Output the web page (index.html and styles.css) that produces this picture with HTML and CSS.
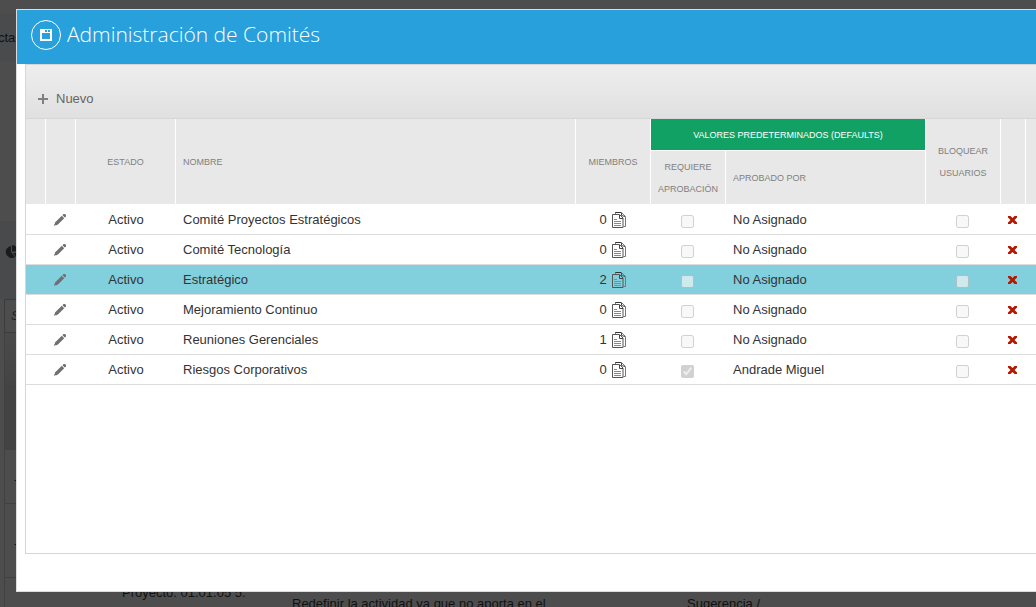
FILE: index.html
```html
<!DOCTYPE html>
<html lang="es">
<head>
<meta charset="utf-8">
<title>Administración de Comités</title>
<link rel="stylesheet" href="styles.css">
</head>
<body>
<svg width="0" height="0" class="sprite" aria-hidden="true">
  <symbol id="pencil" viewBox="0 0 12 12">
    <path fill="#707070" d="M8.500 1.200 9.500 0H11l1 1v1.500L10.800 3.500zM7.800 1.800l2.400 2.400-6 6-1.700 1-1.500.1L0 12v-1l.8-1.300.2-1.200z"/>
  </symbol>
  <symbol id="docs" viewBox="0 0 14 16">
    <path fill="none" stroke="#333" d="M3 .5h6.500"/>
    <path fill="none" stroke="#777" d="M3.500 2V.500M9.500.500l4 4v10h-2"/>
    <path fill="none" stroke="#555" d="M.5 2.500h7l3.500 3.500v9.500H.5z"/>
    <path fill="none" stroke="#444" d="M7.500 3v3.500H11M9.500 1v2.500l3.500 1"/>
    <path stroke="#888" d="M2 7.500h3M2 9.500h7M2 11.500h7M2 13.500h7"/>
  </symbol>
  <symbol id="cross" viewBox="0 0 9 8">
    <path fill="#b31800" d="M0 0h2.500l2 2 2-2H9v1.500L6.500 4 9 6.500V8H6.500l-2-2-2 2H0V6.500L2.500 4 0 1.500z"/>
  </symbol>
</svg>

<main class="page">
  <div class="page-top"></div>
  <div class="page-nav">ctas</div>
  <div class="page-gap"></div>
  <div class="page-title">
    <svg width="14" height="14" viewBox="0 0 14 14"><path fill="#1b1b1b" d="M7 1v6l4 5A6 6 0 1 1 7 1z"/><path fill="#1b1b1b" d="M8 0a6 6 0 0 1 6 6.500H8zM9 8h5l-2 4z"/></svg>
  </div>
  <div class="page-search"><span>S</span></div>
  <div class="page-grid">
    <div class="page-tools"></div>
    <div class="page-head"></div>
    <div class="page-row first"><span>-</span></div>
    <div class="page-row second"><span>-</span></div>
    <div class="page-row last">
      <p class="project">Proyecto. 01.01.05 5.</p>
      <p class="detail">Redefinir la actividad ya que no aporta en el</p>
      <p class="kind">Sugerencia /</p>
    </div>
  </div>
</main>

<section class="dialog" role="dialog" aria-labelledby="dialog-title">
  <header class="dialog-head">
    <svg class="badge" width="30" height="30" viewBox="0 0 30 30" aria-hidden="true">
      <circle cx="15" cy="15" r="14.500" fill="none" stroke="#fff"/>
      <path fill="#fff" fill-rule="evenodd" d="M9 9h12v12H9zM11 13v6h8v-6zM14 10v2h2v-2zM17 10v2h2v-2z"/>
    </svg>
    <h1 id="dialog-title">Administración de Comités</h1>
  </header>
  <div class="panel">
    <div class="toolbar">
      <button type="button" class="new">
        <svg width="10" height="10" viewBox="0 0 10 10" aria-hidden="true"><path fill="#808080" d="M4 0h2v4h4v2H6v4H4V6H0V4h4z"/></svg>
        Nuevo
      </button>
    </div>
    <table class="grid">
      <colgroup>
        <col class="c-mark"><col class="c-edit"><col class="c-state"><col class="c-name"><col class="c-small"><col class="c-small"><col class="c-by"><col class="c-small"><col class="c-del"><col>
      </colgroup>
      <thead>
        <tr>
          <th rowspan="2"></th><th rowspan="2"></th>
          <th rowspan="2">ESTADO</th>
          <th rowspan="2" class="left">NOMBRE</th>
          <th rowspan="2">MIEMBROS</th>
          <th colspan="2" class="group">VALORES PREDETERMINADOS (DEFAULTS)</th>
          <th rowspan="2">BLOQUEAR USUARIOS</th>
          <th rowspan="2"></th><th rowspan="2" class="end"></th>
        </tr>
        <tr><th>REQUIERE APROBACIÓN</th><th class="left">APROBADO POR</th></tr>
      </thead>
      <tbody>
        <tr><td></td><td><button type="button" aria-label="Editar"><svg width="12" height="12"><use href="#pencil"/></svg></button></td><td>Activo</td><td class="left">Comité Proyectos Estratégicos</td><td><span class="members">0<svg width="14" height="16"><use href="#docs"/></svg></span></td><td><input type="checkbox" disabled aria-label="Requiere aprobación"></td><td class="left">No Asignado</td><td><input type="checkbox" disabled aria-label="Bloquear usuarios"></td><td><button type="button" aria-label="Eliminar"><svg width="9" height="8"><use href="#cross"/></svg></button></td><td></td></tr>
        <tr><td></td><td><button type="button" aria-label="Editar"><svg width="12" height="12"><use href="#pencil"/></svg></button></td><td>Activo</td><td class="left">Comité Tecnología</td><td><span class="members">0<svg width="14" height="16"><use href="#docs"/></svg></span></td><td><input type="checkbox" disabled aria-label="Requiere aprobación"></td><td class="left">No Asignado</td><td><input type="checkbox" disabled aria-label="Bloquear usuarios"></td><td><button type="button" aria-label="Eliminar"><svg width="9" height="8"><use href="#cross"/></svg></button></td><td></td></tr>
        <tr class="selected"><td></td><td><button type="button" aria-label="Editar"><svg width="12" height="12"><use href="#pencil"/></svg></button></td><td>Activo</td><td class="left">Estratégico</td><td><span class="members">2<svg width="14" height="16"><use href="#docs"/></svg></span></td><td><input type="checkbox" disabled aria-label="Requiere aprobación"></td><td class="left">No Asignado</td><td><input type="checkbox" disabled aria-label="Bloquear usuarios"></td><td><button type="button" aria-label="Eliminar"><svg width="9" height="8"><use href="#cross"/></svg></button></td><td></td></tr>
        <tr><td></td><td><button type="button" aria-label="Editar"><svg width="12" height="12"><use href="#pencil"/></svg></button></td><td>Activo</td><td class="left">Mejoramiento Continuo</td><td><span class="members">0<svg width="14" height="16"><use href="#docs"/></svg></span></td><td><input type="checkbox" disabled aria-label="Requiere aprobación"></td><td class="left">No Asignado</td><td><input type="checkbox" disabled aria-label="Bloquear usuarios"></td><td><button type="button" aria-label="Eliminar"><svg width="9" height="8"><use href="#cross"/></svg></button></td><td></td></tr>
        <tr><td></td><td><button type="button" aria-label="Editar"><svg width="12" height="12"><use href="#pencil"/></svg></button></td><td>Activo</td><td class="left">Reuniones Gerenciales</td><td><span class="members">1<svg width="14" height="16"><use href="#docs"/></svg></span></td><td><input type="checkbox" disabled aria-label="Requiere aprobación"></td><td class="left">No Asignado</td><td><input type="checkbox" disabled aria-label="Bloquear usuarios"></td><td><button type="button" aria-label="Eliminar"><svg width="9" height="8"><use href="#cross"/></svg></button></td><td></td></tr>
        <tr><td></td><td><button type="button" aria-label="Editar"><svg width="12" height="12"><use href="#pencil"/></svg></button></td><td>Activo</td><td class="left">Riesgos Corporativos</td><td><span class="members">0<svg width="14" height="16"><use href="#docs"/></svg></span></td><td><input type="checkbox" checked disabled aria-label="Requiere aprobación"></td><td class="left">Andrade Miguel</td><td><input type="checkbox" disabled aria-label="Bloquear usuarios"></td><td><button type="button" aria-label="Eliminar"><svg width="9" height="8"><use href="#cross"/></svg></button></td><td></td></tr>
      </tbody>
    </table>
  </div>
</section>
</body>
</html>
```
FILE: styles.css
```css
* { box-sizing: border-box; }
body {
  margin: 0;
  height: 100vh;
  overflow: hidden;
  position: relative;
  background: #4d4d4d;
  color: #333;
  font: 13px/16px "Liberation Sans", Arial, sans-serif;
}
.sprite { position: absolute; }
h1, p { margin: 0; font-weight: normal; }
button { border: 0; background: none; padding: 0; font: inherit; color: inherit; cursor: pointer; }

/* Dimmed page behind the dialog */
.page { color: #111; height: 100%; overflow: hidden; display: flex; flex-direction: column; }
.page-top { height: 13px; flex: none; }
.page-nav { height: 48px; flex: none; background: #4a4b4d; padding-top: 17px; text-indent: -2px; }
.page-gap { height: 160px; flex: none; }
.page-title { height: 78px; flex: none; background: #484a4c; padding: 24px 4px; }
.page-search { height: 34px; flex: none; margin-left: 4px; border: 1px solid #3c3c3c; border-right: 0; padding: 8px 6px; font-style: italic; color: #222; }
.page-grid { flex: 1; margin-left: 4px; border-left: 1px solid #3f4143; }
.page-tools { height: 54px; background: linear-gradient(#4a4a4a, #444); border-bottom: 1px solid #414141; }
.page-head { height: 63px; background: #434343; }
.page-row { border-bottom: 1px solid #414141; padding-left: 9px; }
.first { height: 54px; padding-top: 22px; }
.second { height: 74px; padding-top: 32px; }
.last { height: 40px; display: grid; grid-template-columns: 170px 395px 1fr; padding: 7px 0 0 117px; border: 0; }
.detail, .kind { padding-top: 11px; }

.dialog {
  position: absolute;
  top: 9px;
  left: 16px;
  right: 0;
  background: #fff;
  border: 1px solid #ddd;
  border-right: 0;
  padding-bottom: 37px;
}
.dialog-head {
  display: flex;
  align-items: center;
  gap: 6px;
  height: 54px;
  padding: 0 14px 4px;
  background: #27a0dc;
  color: #fff;
}
.dialog-head h1 { font: 300 21px/28px "Open Sans", "Segoe UI", sans-serif; padding-bottom: 2px; }
.panel { margin-left: 8px; min-height: 490px; border: 1px solid #d6d6d6; border-right: 0; }
.toolbar {
  height: 54px;
  padding: 26px 12px 0;
  background: linear-gradient(#eee, #e0e0e0);
  border-bottom: 1px solid #d6d6d6;
}
.new { display: flex; align-items: center; gap: 8px; color: #666; }

.grid { width: 100%; table-layout: fixed; border-collapse: separate; border-spacing: 0; }
.c-mark { width: 20px; }
.c-edit { width: 30px; }
.c-state { width: 100px; }
.c-name { width: 400px; }
.c-small { width: 75px; }
.c-by { width: 200px; }
.c-del { width: 25px; }
.grid th {
  height: 54px;
  padding: 0 7px;
  background: #e8e8e8;
  border: solid #fff;
  border-width: 0 1px 1px 0;
  color: #808080;
  font-size: 9px;
  line-height: 22px;
  font-weight: normal;
}
.grid th.group { height: 32px; background: #12a164; color: #fff; }
.grid th.end { border-right: 0; padding: 0; }
.grid td { height: 30px; padding: 0 8px 0 6px; border-bottom: 1px solid #ddd; text-align: center; }
.grid td:nth-child(3) { padding: 0 7px; }
.grid .left, .grid td.left { text-align: left; padding-left: 7px; }
.selected td { background: #82cfdd; }
.grid td button { display: block; margin: 0 auto; }
.grid td svg { display: block; }
.members { display: flex; justify-content: center; align-items: center; gap: 5px; }
.grid input { display: block; width: 13px; height: 13px; margin: 3px auto 0; }
```
